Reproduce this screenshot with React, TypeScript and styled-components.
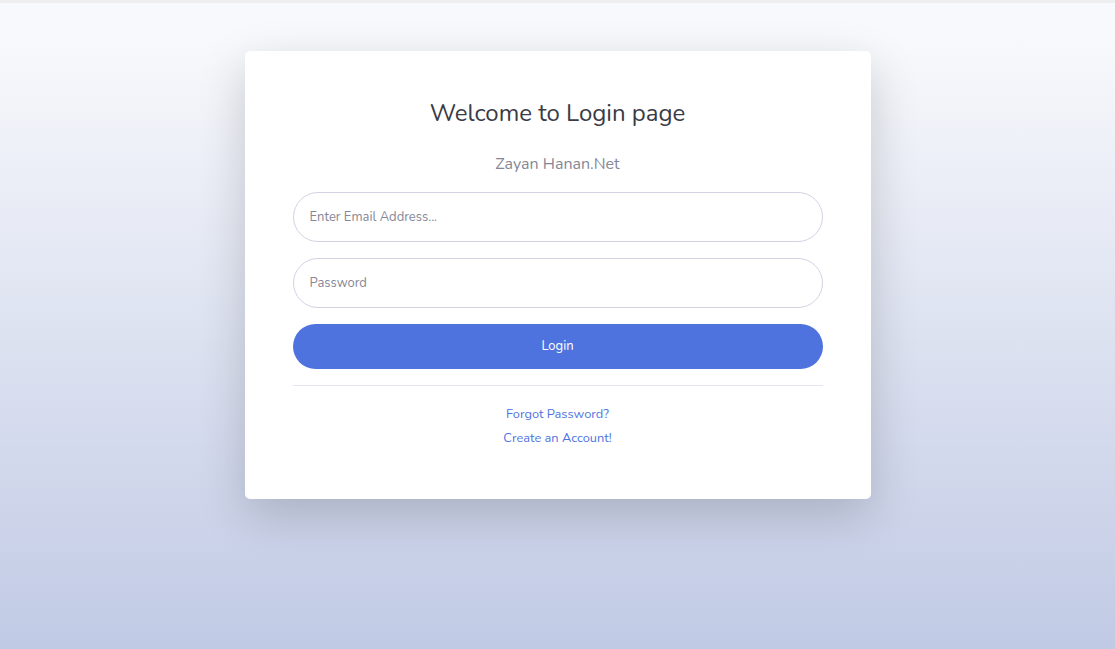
import React from 'react'
import styled, { createGlobalStyle } from 'styled-components'

const GlobalStyle = createGlobalStyle`
  html, body {
    margin: 0;
    height: 100%;
  }
  body {
    font-family: Nunito, Lato, "Open Sans", sans-serif;
    color: #858796;
  }
  * {
    box-sizing: border-box;
  }
`

const Page = styled.div`
  min-height: 100vh;
  border-top: 3px solid #eeeeef;
  background: linear-gradient(180deg, #f8f9fc 5%, #c1cae5 100%);
  display: flex;
  justify-content: center;
  align-items: flex-start;
  padding-top: 48px;
`

const Card = styled.div`
  width: 626px;
  background: #fff;
  border-radius: 5px;
  box-shadow: 0 1rem 3rem rgba(0, 0, 0, 0.175);
  padding: 48px;
  display: flex;
  flex-direction: column;
`

const Title = styled.h1`
  margin: 0 0 24px;
  font-size: 24px;
  font-weight: 400;
  line-height: 1.2;
  color: #3a3b45;
  text-align: center;
`

const Subtitle = styled.p`
  margin: 0 0 16px;
  font-size: 16px;
  line-height: 24px;
  color: #858796;
  text-align: center;
`

const Form = styled.form`
  display: flex;
  flex-direction: column;
  gap: 16px;
`

const Input = styled.input`
  width: 100%;
  height: 50px;
  padding: 0 16px;
  border: 1px solid #d1d3e2;
  border-radius: 25px;
  font-family: inherit;
  font-size: 13px;
  color: #6e707e;
  outline: none;

  &::placeholder {
    color: #858796;
  }
`

const LoginButton = styled.button`
  width: 100%;
  height: 45px;
  border: none;
  border-radius: 23px;
  background: #4e73df;
  color: #fff;
  font-family: inherit;
  font-size: 13px;
  cursor: pointer;
`

const Divider = styled.hr`
  width: 100%;
  margin: 16px 0;
  border: 0;
  border-top: 1px solid #e3e6f0;
`

const LinkRow = styled.div`
  text-align: center;
  line-height: 23.5px;
`

const SmallLink = styled.a`
  font-size: 12.8px;
  color: #4e73df;
  text-decoration: none;
`

export default function App() {
  return (
    <>
      <GlobalStyle />
      <Page>
        <Card>
          <Title>Welcome to Login page</Title>
          <Subtitle>Zayan Hanan.Net</Subtitle>
          <Form onSubmit={e => e.preventDefault()}>
            <Input type="email" placeholder="Enter Email Address..." />
            <Input type="password" placeholder="Password" />
            <LoginButton type="submit">Login</LoginButton>
          </Form>
          <Divider />
          <LinkRow>
            <SmallLink href="#">Forgot Password?</SmallLink>
          </LinkRow>
          <LinkRow>
            <SmallLink href="#">Create an Account!</SmallLink>
          </LinkRow>
        </Card>
      </Page>
    </>
  )
}
